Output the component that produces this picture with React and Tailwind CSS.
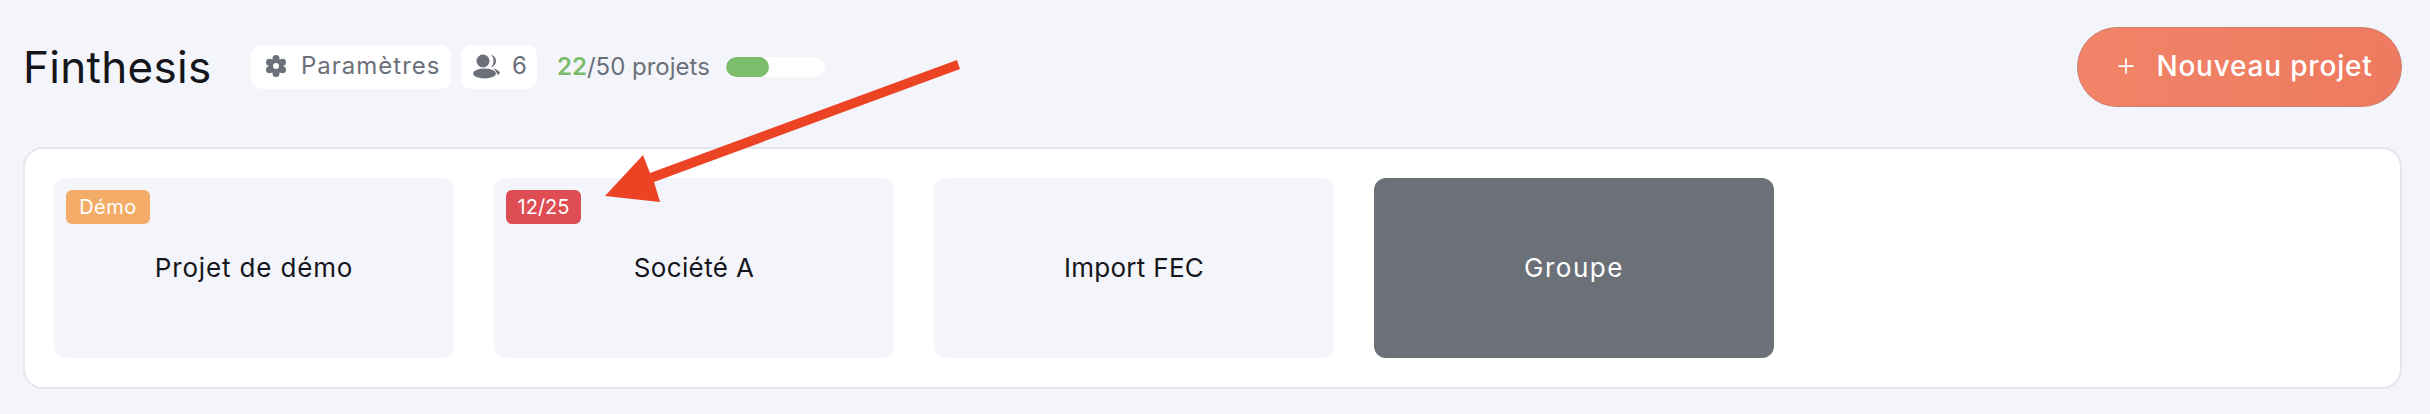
import { Plus } from "lucide-react";

function Chip({ children }) {
  return (
    <div className="h-11 pb-px bg-white rounded-[10px] flex items-center text-[24px] text-[#6b7079]">
      {children}
    </div>
  );
}

function ProjectCard({ name, badge, badgeClass, nameClass, dark }) {
  return (
    <div
      className={
        dark
          ? "relative w-[400px] h-[180px] pb-[2px] rounded-xl bg-[#6b7079] text-white flex items-center justify-center text-[26px]"
          : "relative w-[400px] h-[180px] pb-[2px] rounded-xl bg-[#f4f5fb] text-[#14161c] flex items-center justify-center text-[26px]"
      }
    >
      {badge && (
        <span className={"absolute top-3 left-3 h-[34px] rounded-md text-white text-[20px] flex items-center justify-center " + badgeClass}>
          {badge}
        </span>
      )}
      <span className={nameClass}>{name}</span>
    </div>
  );
}

export default function App() {
  return (
    <div className="relative w-[2430px] h-[414px] bg-[#f4f5fb] overflow-hidden font-['Inter','Liberation_Sans',sans-serif]">

      {/* HEADER */}
      <div className="h-[147px] pl-[23px] pr-[28px] pb-[14px] flex items-center justify-between">
        <div className="flex items-center">
          <h1 className="text-[44px] text-[#14161c] tracking-[0.3px] w-[228px]">Finthesis</h1>

          <div className="flex items-center gap-[10px]">
            <Chip>
              <div className="w-[200px] flex items-center pl-[14px] gap-[14px]">
                <svg width="22" height="24" viewBox="0 0 22 24" fill="#6b7079">
                  <circle cx="11" cy="12" r="7.5" />
                  <circle cx="11" cy="4.5" r="3.5" />
                  <circle cx="11" cy="19.5" r="3.5" />
                  <circle cx="4.5" cy="8.25" r="3.5" />
                  <circle cx="17.5" cy="8.25" r="3.5" />
                  <circle cx="4.500" cy="15.75" r="3.5" />
                  <circle cx="17.5" cy="15.75" r="3.5" />
                  <circle cx="11" cy="12" r="3" fill="#ffffff" />
                </svg>
                <span className="tracking-[1px]">Paramètres</span>
              </div>
            </Chip>
            <Chip>
              <div className="w-[76px] flex items-center pl-[12px] gap-[12px]">
                <svg width="27" height="26" viewBox="0 0 27 26" fill="#6b7079">
                  <circle cx="10" cy="8" r="6.5" />
                  <ellipse cx="11.5" cy="20.5" rx="11.5" ry="5" />
                  <path d="M18 1.5c3 .8 5 3.400 5 6.500s-2 5.700-5 6.500c1.600-1.800 2.500-4 2.500-6.500S19.600 3.300 18 1.500z" />
                  <path d="M20 15.500c3 .3 6 2 7 4.500-.6 1-1.500 1.600-2.500 2-.6-2.600-2-4.800-4.500-6.500z" />
                </svg>
                <span>6</span>
              </div>
            </Chip>
          </div>

          <div className="ml-[20px] flex items-center text-[24px] text-[#6b7079]">
            <span className="text-[#7bbd6b] font-semibold">22</span>
            <span>/50 projets</span>
            <div className="ml-[16px] w-[99px] h-5 rounded-full bg-white overflow-hidden">
              <div className="h-full rounded-full bg-[#7bbd6b]" style={{ width: `${(22 / 50) * 100}%` }} />
            </div>
          </div>
        </div>

        <button className="w-[325px] h-20 pl-2 pb-[2px] rounded-full bg-gradient-to-r from-[#f18468] to-[#ee7a5f] border border-[#c9806f] text-white text-[28px] font-medium tracking-[0.8px] flex items-center justify-center gap-[18px]">
          <Plus size={24} strokeWidth={1.75} />
          Nouveau projet
        </button>
      </div>

      {/* PROJECTS */}
      <div className="mx-[23px] w-[2379px] h-[242px] bg-white border-2 border-[#e5e7ef] rounded-[20px] p-[29px] flex gap-10">
        <ProjectCard name="Projet de démo" nameClass="tracking-[0.85px]" badge="Démo" badgeClass="w-[84px] tracking-[0.5px] bg-[#f4ad68]" />
        <ProjectCard name="Société A" nameClass="tracking-[0.35px]" badge="12/25" badgeClass="w-[75px] bg-[#de4d53]" />
        <ProjectCard name="Import FEC" nameClass="tracking-[0.3px]" />
        <ProjectCard name="Groupe" nameClass="tracking-[1.5px]" dark />
      </div>

      {/* annotation arrow */}
      <svg className="absolute inset-0 pointer-events-none" width="2430" height="414">
        <polygon fill="#ec4325" points="605,196 643,155 650,173 957,60 960,69 654,182 660,202" />
      </svg>
    </div>
  );
}
